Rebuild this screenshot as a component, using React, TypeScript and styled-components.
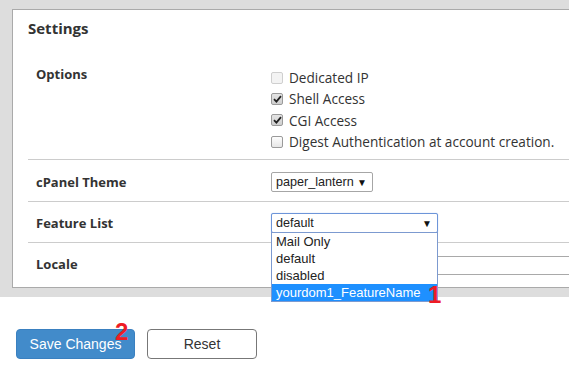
import React from 'react';
import styled, {createGlobalStyle} from 'styled-components';

const GlobalStyle = createGlobalStyle`
  html, body {
    margin: 0;
    background: #fff;
  }
  body {
    font-family: "Open Sans", "Liberation Sans", sans-serif;
    color: #333;
  }
`;

const Backdrop = styled.div`
  background: #ddd;
  padding: 9px 0 9px 12px;
`;

const Panel = styled.section`
  box-sizing: border-box;
  height: 279px;
  background: #fff;
  border: 1px solid #aaa;
  border-right: none;
  padding-left: 15px;
`;

const Heading = styled.h2`
  margin: 0;
  padding-top: 7px;
  font-size: 15px;
  line-height: 22px;
  font-weight: 700;
  color: #333;
`;

const Row = styled.div<{$height: number; $top?: number; $last?: boolean; $start?: boolean}>`
  box-sizing: border-box;
  display: flex;
  align-items: ${({$start}) => ($start ? 'flex-start' : 'center')};
  height: ${({$height}) => $height}px;
  padding-top: ${({$top}) => $top || 0}px;
  border-bottom: ${({$last}) => ($last ? 'none' : '1px solid #ccc')};
`;

const Label = styled.div<{$shift?: number}>`
  flex: none;
  width: 243px;
  box-sizing: border-box;
  padding-left: 8px;
  margin-top: ${({$shift}) => $shift || 0}px;
  font-size: 13px;
  line-height: 21px;
  font-weight: 700;
`;

const Value = styled.div`
  position: relative;
  flex: 1;
`;

const CheckList = styled.div`
  display: flex;
  flex-direction: column;
`;

const CheckLine = styled.label`
  display: flex;
  align-items: center;
  gap: 6px;
  height: 21.3px;
  font-size: 13.6px;
  color: #333;
  white-space: nowrap;
`;

const Box = styled.span<{$checked?: boolean; $disabled?: boolean}>`
  box-sizing: border-box;
  display: inline-flex;
  align-items: center;
  justify-content: center;
  width: 12px;
  height: 12px;
  border-radius: 2px;
  border: 1px solid ${({$disabled}) => ($disabled ? '#cfcfcf' : '#9a9a9a')};
  background: ${({$checked, $disabled}) =>
    $disabled
      ? '#f3f3f3'
      : $checked
      ? 'linear-gradient(#e4e4e4, #cfcfcf)'
      : 'linear-gradient(#fdfdfd, #e6e6e6)'};
`;

const SelectBox = styled.div<{$width: number; $focused?: boolean}>`
  box-sizing: border-box;
  display: flex;
  align-items: center;
  justify-content: space-between;
  width: ${({$width}) => $width}px;
  height: 20px;
  padding: 0 5px 0 4px;
  border: 1px solid ${({$focused}) => ($focused ? '#6d95d9' : '#a6a6a6')};
  border-radius: 2px;
  box-shadow: ${({$focused}) => ($focused ? '0 0 1px #9ab8ea' : 'none')};
  font-family: "Liberation Sans", Arial, sans-serif;
  font-size: 12.6px;
  color: #222;
  background: #fff;
  white-space: nowrap;
`;

const Arrow = styled.span`
  font-size: 10px;
  color: #111;
`;

const OptionList = styled.ul`
  position: absolute;
  top: 19px;
  left: 0;
  z-index: 2;
  box-sizing: border-box;
  width: 167px;
  margin: 0;
  padding: 0;
  list-style: none;
  border: 1px solid #7c9ad0;
  background: #fff;
  font-family: "Liberation Sans", Arial, sans-serif;
  font-size: 13px;
`;

const OptionItem = styled.li<{$selected?: boolean}>`
  height: 17px;
  line-height: 17px;
  padding-left: 4px;
  color: ${({$selected}) => ($selected ? '#fff' : '#222')};
  background: ${({$selected}) => ($selected ? '#1e90ff' : 'transparent')};
`;

const TextBox = styled.div`
  box-sizing: border-box;
  width: 100%;
  height: 19px;
  margin-top: 1px;
  border: 1px solid #a9a9a9;
  border-right: none;
  background: #fff;
`;

const Marker = styled.span<{$top: number; $left: number}>`
  position: absolute;
  top: ${({$top}) => $top}px;
  left: ${({$left}) => $left}px;
  z-index: 3;
  font-family: "Liberation Sans", Arial, sans-serif;
  font-weight: 700;
  font-size: 24px;
  line-height: 1;
  color: #ee1c25;
`;

const Actions = styled.div`
  display: flex;
  gap: 12px;
  margin: 32px 0 0 16px;
`;

const Button = styled.button<{$primary?: boolean}>`
  position: relative;
  box-sizing: border-box;
  height: 30px;
  width: ${({$primary}) => ($primary ? '119px' : '110px')};
  padding: 0;
  border-radius: 4px;
  border: 1px solid ${({$primary}) => ($primary ? '#3a80c0' : '#777')};
  background: ${({$primary}) => ($primary ? '#428bca' : '#fff')};
  color: ${({$primary}) => ($primary ? '#fff' : '#333')};
  font-family: "Liberation Sans", Arial, sans-serif;
  font-size: 14px;
`;

const Check = () => (
  <svg width="9" height="8" viewBox="0 0 9 8">
    <path d="M1 4.2 L3.4 6.6 L8 1.2" fill="none" stroke="#222" strokeWidth="1.8" />
  </svg>
);

const options = [
  {label: 'Dedicated IP', checked: false, disabled: true},
  {label: 'Shell Access', checked: true},
  {label: 'CGI Access', checked: true},
  {label: 'Digest Authentication at account creation.', checked: false},
];

export default function App() {
  return (
    <>
      <GlobalStyle />
      <Backdrop>
        <Panel>
          <Heading>Settings</Heading>
          <Row $height={121} $top={28} $start>
            <Label $shift={-3}>Options</Label>
            <CheckList>
              {options.map((o) => (
                <CheckLine key={o.label}>
                  <Box $checked={o.checked} $disabled={o.disabled}>
                    {o.checked && <Check />}
                  </Box>
                  {o.label}
                </CheckLine>
              ))}
            </CheckList>
          </Row>
          <Row $height={42} $top={3}>
            <Label>cPanel Theme</Label>
            <Value>
              <SelectBox $width={102}>
                paper_lantern <Arrow>▼</Arrow>
              </SelectBox>
            </Value>
          </Row>
          <Row $height={41} $top={2}>
            <Label>Feature List</Label>
            <Value>
              <SelectBox $width={167} $focused>
                default <Arrow>▼</Arrow>
              </SelectBox>
              <OptionList>
                <OptionItem>Mail Only</OptionItem>
                <OptionItem>default</OptionItem>
                <OptionItem>disabled</OptionItem>
                <OptionItem $selected>yourdom1_FeatureName</OptionItem>
                <Marker $top={50} $left={156}>1</Marker>
              </OptionList>
            </Value>
          </Row>
          <Row $height={43} $last>
            <Label>Locale</Label>
            <Value>
              <TextBox />
            </Value>
          </Row>
        </Panel>
      </Backdrop>
      <Actions>
        <Button $primary>
          Save Changes
          <Marker $top={-10} $left={98}>2</Marker>
        </Button>
        <Button>Reset</Button>
      </Actions>
    </>
  );
}
